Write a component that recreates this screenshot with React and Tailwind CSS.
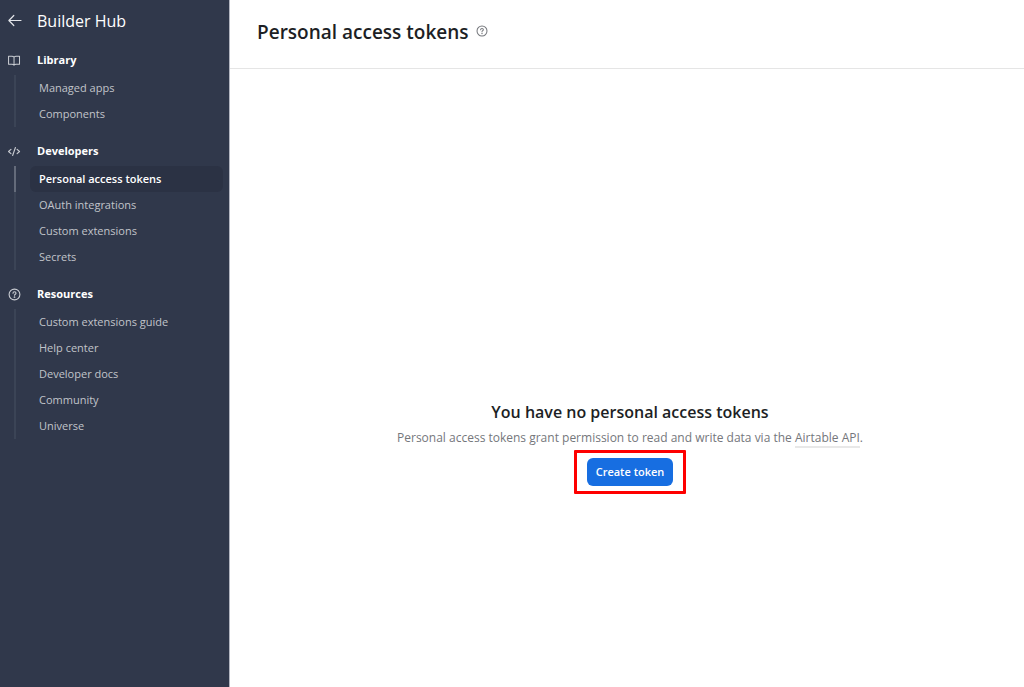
const SECTIONS = [
  { title: 'Library', icon: BookIcon, items: ['Managed apps', 'Components'] },
  {
    title: 'Developers',
    icon: CodeIcon,
    items: ['Personal access tokens', 'OAuth integrations', 'Custom extensions', 'Secrets'],
  },
  {
    title: 'Resources',
    icon: HelpIcon,
    items: ['Custom extensions guide', 'Help center', 'Developer docs', 'Community', 'Universe'],
  },
]

const ACTIVE_ITEM = 'Personal access tokens'

function BackIcon({ className }) {
  return (
    <svg viewBox="0 0 14 14" fill="none" stroke="currentColor" strokeWidth="1.2" strokeLinecap="round" strokeLinejoin="round" className={className}>
      <path d="M13 6.500H1M5.800 1.500L.9 6.500 5.800 11.500" />
    </svg>
  )
}

function BookIcon({ className }) {
  return (
    <svg viewBox="0 0 14 14" fill="none" stroke="currentColor" strokeWidth="1.1" strokeLinejoin="round" className={className}>
      <path d="M6.500 3.500C6 2.800 5.200 2.500 4.300 2.500H.6v8.500h3.700c.9 0 1.700.3 2.200 1 .5-.7 1.300-1 2.200-1h3.700V2.500H8.700C7.800 2.500 7 2.800 6.500 3.500zM6.500 3.500V12.500" />
    </svg>
  )
}

function CodeIcon({ className }) {
  return (
    <svg viewBox="0 0 14 14" fill="none" stroke="currentColor" strokeWidth="1.2" strokeLinecap="round" strokeLinejoin="round" className={className}>
      <path d="M3.200 4.700L.6 7l2.600 2.300M9.800 4.700L12.400 7l-2.600 2.300M8 2.700l-3 8.600" />
    </svg>
  )
}

function HelpIcon({ className }) {
  return (
    <svg viewBox="0 0 13 13" fill="none" stroke="currentColor" strokeWidth="1.1" strokeLinecap="round" className={className}>
      <circle cx="6.500" cy="6.500" r="5.400" />
      <path d="M5 5.200c0-.8.700-1.400 1.500-1.400S8 4.400 8 5.200c0 .9-1.500 1.100-1.500 2.100" />
      <circle cx="6.500" cy="9.200" r=".3" />
    </svg>
  )
}

function NavItem({ label, active }) {
  return (
    <li className={`flex border-l-2 pl-[14px] ${active ? 'border-[#646b7a]' : 'border-[#3b4456]'}`}>
      <a
        href="#"
        aria-current={active ? 'page' : undefined}
        className={`flex h-[26px] flex-1 items-center rounded-md pl-[9px] text-[11px] ${active ? 'bg-[#2b3244] font-semibold text-white' : 'text-[#c1c4ca]'}`}
      >
        {label}
      </a>
    </li>
  )
}

function NavSection({ title, icon: Icon, items }) {
  return (
    <section>
      <h2 className="flex h-[30px] items-center gap-4 pl-2 text-[11px] font-bold text-white">
        <Icon className="size-[13px] text-[#c9ccd2]" />
        {title}
      </h2>
      <ul className="ml-[14px]">
        {items.map((item) => (
          <NavItem key={item} label={item} active={item === ACTIVE_ITEM} />
        ))}
      </ul>
    </section>
  )
}

function Sidebar() {
  return (
    <aside className="w-[230px] shrink-0 border-r border-[#b3b6c1] bg-[#30384b] pr-[6px]">
      <div className="flex h-[45px] items-center gap-[15px] pb-1 pl-2 text-white">
        <a href="#" aria-label="Back">
          <BackIcon className="size-[14px] text-[#e3e5e9]" />
        </a>
        <h1 className="text-[16px] leading-6">Builder Hub</h1>
      </div>
      <nav className="flex flex-col gap-[9px]">
        {SECTIONS.map((section) => (
          <NavSection key={section.title} {...section} />
        ))}
      </nav>
    </aside>
  )
}

export default function App() {
  return (
    <div className="flex min-h-screen bg-white font-['Open_Sans','Noto_Sans',sans-serif] text-[#1d1f25]">
      <Sidebar />
      <main className="flex min-w-0 flex-1 flex-col">
        <header className="flex h-[69px] items-center gap-[7px] border-b border-[#e5e5e5] px-[27px] pb-1">
          <h2 className="text-[19px] font-semibold">Personal access tokens</h2>
          <button type="button" aria-label="Help" className="pb-[2px] text-[#75777c]">
            <HelpIcon className="size-3" />
          </button>
        </header>
        <div className="flex flex-1 flex-col items-center justify-center pt-[138px] pl-[6px]">
          <h3 className="text-[16px] leading-6 font-semibold">You have no personal access tokens</h3>
          <p className="mt-1 text-[12px] leading-5 text-[#75777c]">
            Personal access tokens grant permission to read and write data via the{' '}
            <a href="#" className="border-b-2 border-[#e8e8e8]">Airtable API</a>.
          </p>
          <div className="mt-[2px] rounded-[1px] border-3 border-[#fe0000] px-[10px] py-[5px]">
            <button type="button" className="block h-7 rounded-md bg-[#176ee1] px-[9px] text-[11px] font-semibold text-white">
              Create token
            </button>
          </div>
        </div>
      </main>
    </div>
  )
}
